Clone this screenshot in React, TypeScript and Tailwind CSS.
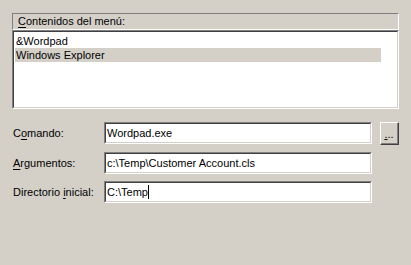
import React from "react";

function Field({
  label,
  value,
  caret,
}: {
  label: [string, string, string];
  value: string;
  caret?: boolean;
}) {
  return (
    <div className="flex items-center h-[22px]">
      <div className="w-[92px] pl-px">
        {label[0]}
        <span className="underline underline-offset-2">{label[1]}</span>
        {label[2]}
      </div>
      <div className="w-[268px] h-[22px] border border-t-[#808080] border-l-[#808080] border-b-white border-r-white">
        <div className="h-full bg-white border border-t-[#404040] border-l-[#404040] border-b-[#d4d0c8] border-r-[#d4d0c8] flex items-center pl-[1px]">
          <span className="leading-none">{value}</span>
          {caret && <span className="inline-block w-px h-[14px] bg-black" />}
        </div>
      </div>
    </div>
  );
}

export default function App() {
  return (
    <div
      className="w-[411px] h-[265px] bg-[#d4d0c8] pt-[13px] pl-[12px] text-[11px] text-black"
      style={{ fontFamily: '"Liberation Sans", Arial, sans-serif' }}
    >
      <div className="w-[387px]">
        <div className="h-[17px] border border-t-[#808080] border-l-[#808080] border-b-white border-r-white flex items-center pl-[5px]">
          <span>
            <span className="underline underline-offset-2">C</span>ontenidos del menú:
          </span>
        </div>
        <div className="h-[79px] border border-t-[#808080] border-l-[#808080] border-b-white border-r-white">
          <div className="h-full bg-white border border-t-[#404040] border-l-[#404040] border-b-[#d4d0c8] border-r-[#d4d0c8] pt-[2px] pl-px">
            <div className="w-[366px] h-[14px] flex items-center pl-px">&amp;Wordpad</div>
            <div className="w-[366px] h-[14px] flex items-center pl-px bg-[#d4d0c8]">
              Windows Explorer
            </div>
          </div>
        </div>
      </div>

      <div className="mt-[13px] flex flex-col gap-[7px]">
        <div className="flex items-start">
          <Field label={["C", "o", "mando:"]} value="Wordpad.exe" />
          <div className="ml-[8px] w-[19px] h-[23px] border border-t-white border-l-white border-b-[#404040] border-r-[#404040]">
            <div className="h-full border-b border-r border-b-[#808080] border-r-[#808080] flex items-center justify-center pt-[3px]">
              <span className="leading-none">
                <span className="underline underline-offset-1">.</span>..
              </span>
            </div>
          </div>
        </div>
        <Field label={["", "A", "rgumentos:"]} value="c:\Temp\Customer Account.cls" />
        <Field label={["Directorio ", "i", "nicial:"]} value="C:\Temp" caret />
      </div>
    </div>
  );
}
